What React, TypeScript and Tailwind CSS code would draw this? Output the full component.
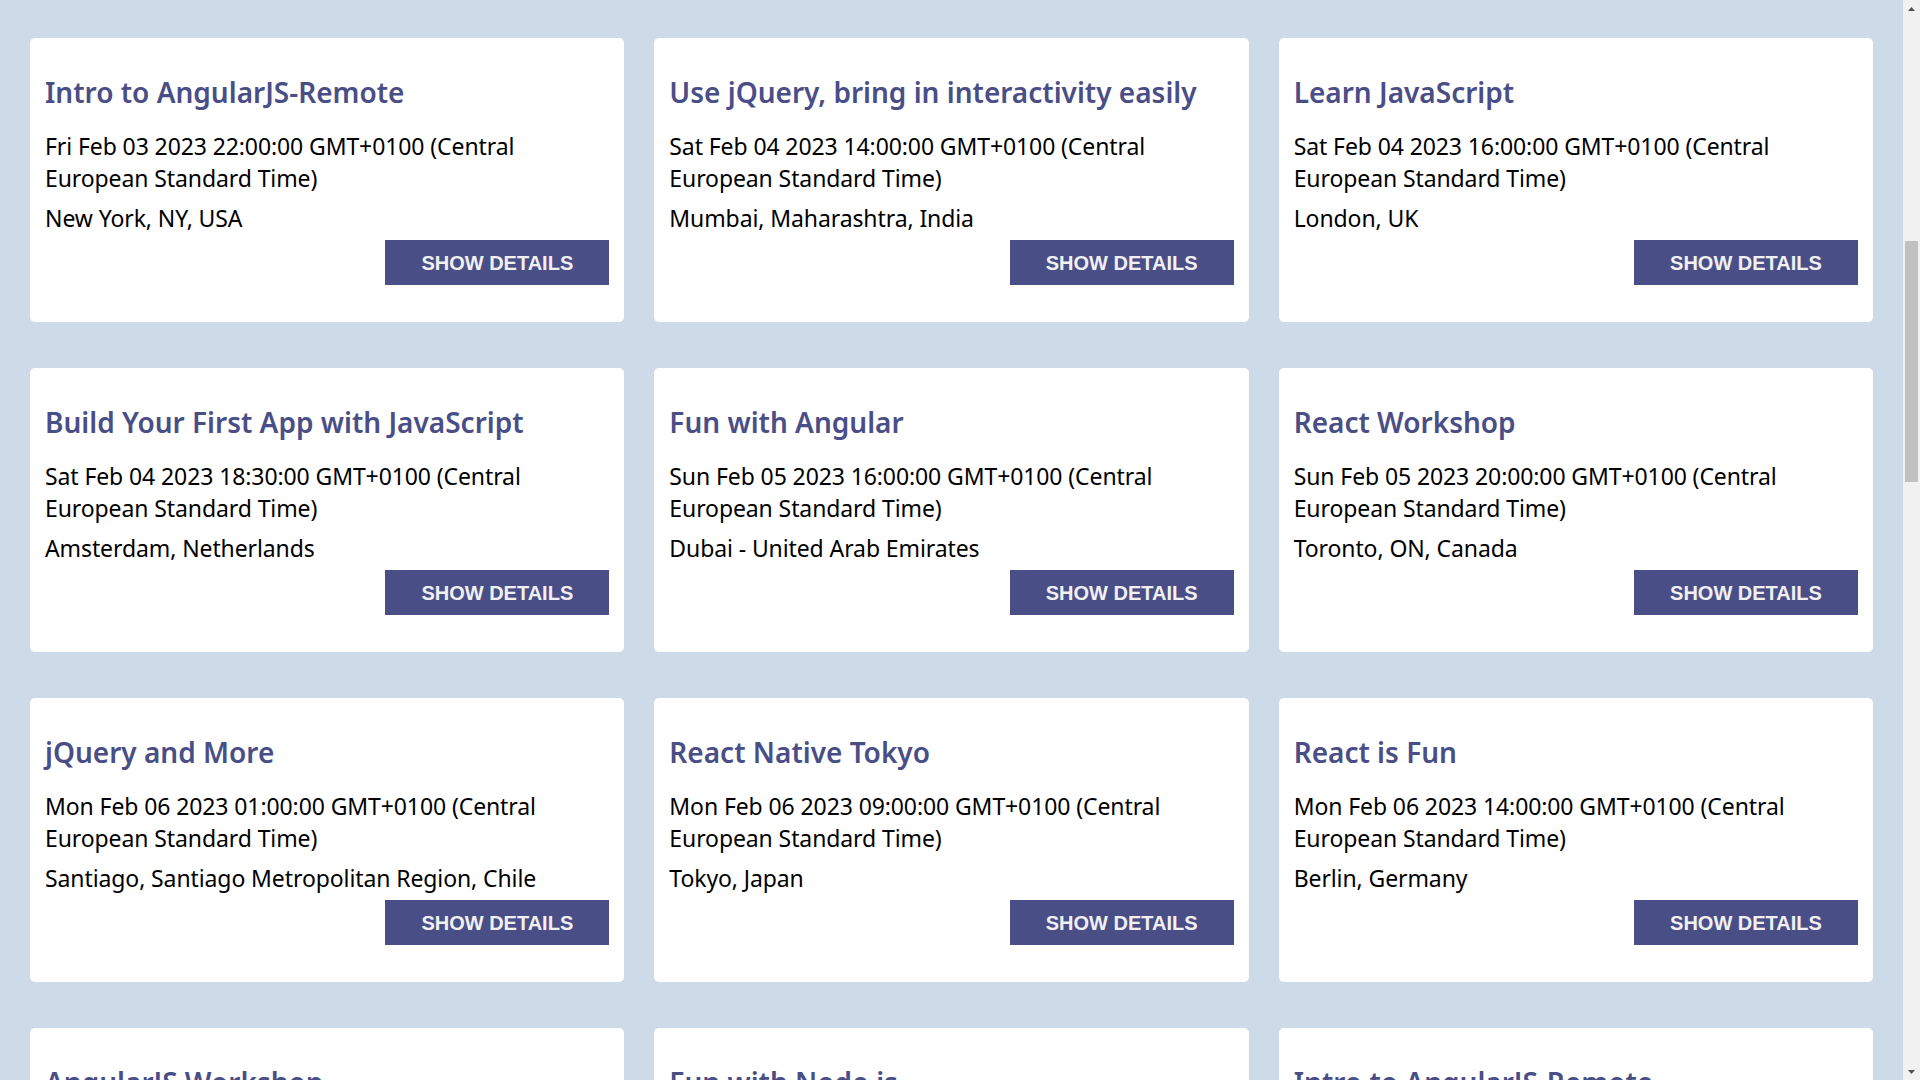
import React from "react";

type Event = { title: string; date: string; location: string };

const events: Event[] = [
  { title: "Intro to AngularJS-Remote", date: "Fri Feb 03 2023 22:00:00 GMT+0100 (Central European Standard Time)", location: "New York, NY, USA" },
  { title: "Use jQuery, bring in interactivity easily", date: "Sat Feb 04 2023 14:00:00 GMT+0100 (Central European Standard Time)", location: "Mumbai, Maharashtra, India" },
  { title: "Learn JavaScript", date: "Sat Feb 04 2023 16:00:00 GMT+0100 (Central European Standard Time)", location: "London, UK" },
  { title: "Build Your First App with JavaScript", date: "Sat Feb 04 2023 18:30:00 GMT+0100 (Central European Standard Time)", location: "Amsterdam, Netherlands" },
  { title: "Fun with Angular", date: "Sun Feb 05 2023 16:00:00 GMT+0100 (Central European Standard Time)", location: "Dubai - United Arab Emirates" },
  { title: "React Workshop", date: "Sun Feb 05 2023 20:00:00 GMT+0100 (Central European Standard Time)", location: "Toronto, ON, Canada" },
  { title: "jQuery and More", date: "Mon Feb 06 2023 01:00:00 GMT+0100 (Central European Standard Time)", location: "Santiago, Santiago Metropolitan Region, Chile" },
  { title: "React Native Tokyo", date: "Mon Feb 06 2023 09:00:00 GMT+0100 (Central European Standard Time)", location: "Tokyo, Japan" },
  { title: "React is Fun", date: "Mon Feb 06 2023 14:00:00 GMT+0100 (Central European Standard Time)", location: "Berlin, Germany" },
  { title: "AngularJS Workshop", date: "Tue Feb 07 2023 10:00:00 GMT+0100 (Central European Standard Time)", location: "San Francisco, CA, USA" },
  { title: "Fun with Node.js", date: "Tue Feb 07 2023 15:00:00 GMT+0100 (Central European Standard Time)", location: "Paris, France" },
  { title: "Intro to AngularJS-Remote", date: "Wed Feb 08 2023 22:00:00 GMT+0100 (Central European Standard Time)", location: "New York, NY, USA" },
];

function Card({ e }: { e: Event }) {
  return (
    <div className="flex flex-col rounded-[5px] bg-white px-[15px] pb-[37px] pt-[36px]">
      <h2 className="m-0 text-[28px] font-semibold leading-[36px] text-[#4a4e87] font-['Noto_Sans',sans-serif]">
        {e.title}
      </h2>
      <p className="mt-[20px] text-[23px] leading-[32px] tracking-[-0.1px] text-black font-['Noto_Sans',sans-serif]">
        {e.date}
      </p>
      <p className="mt-[8px] text-[23px] leading-[32px] tracking-[-0.1px] text-black font-['Noto_Sans',sans-serif]">
        {e.location}
      </p>
      <div className="mt-[6px] flex justify-end">
        <button className="h-[45px] w-[224px] bg-[#4a4e87] text-[20px] font-bold leading-[24px] text-[#f0f0f0] uppercase font-['Liberation_Sans',Arial,sans-serif]">
          Show Details
        </button>
      </div>
    </div>
  );
}

export default function App() {
  return (
    <div className="flex h-[1080px] w-full overflow-hidden bg-[#cddbe8]">
      <div className="flex-1 overflow-hidden pl-[30px] pr-[30px] pt-[38px]">
        <div className="grid grid-cols-3 gap-x-[30px] gap-y-[46px]">
          {events.map((e, i) => (
            <Card key={i} e={e} />
          ))}
        </div>
      </div>
      <div className="flex w-[17px] shrink-0 flex-col bg-[#f1f1f1]">
        <div className="flex h-[17px] items-center justify-center">
          <svg width="7" height="4" viewBox="0 0 7 4">
            <path d="M3.5 0 L7 4 L0 4 Z" fill="#505050" />
          </svg>
        </div>
        <div className="flex flex-1 flex-col px-[2px]">
          <div className="h-[224px] shrink-0" />
          <div className="h-[241px] shrink-0 bg-[#c1c1c1]" />
        </div>
        <div className="flex h-[17px] items-center justify-center">
          <svg width="7" height="4" viewBox="0 0 7 4">
            <path d="M0 0 L7 0 L3.5 4 Z" fill="#505050" />
          </svg>
        </div>
      </div>
    </div>
  );
}
